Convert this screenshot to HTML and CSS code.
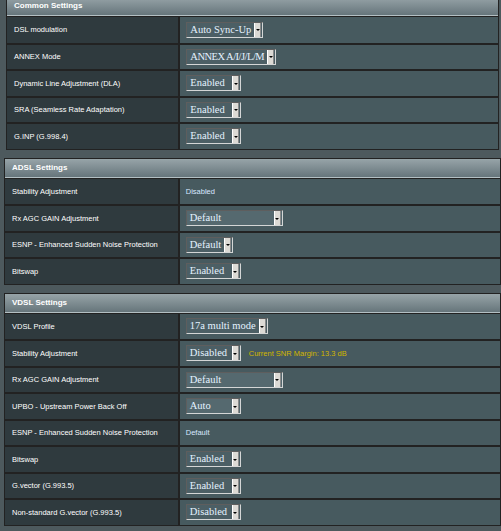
FILE: index.html
```html
<!DOCTYPE html>
<html>
	<head>
		<meta charset="utf-8" />
		<title>DSL Settings</title>
		<link rel="stylesheet" href="styles.css">
	</head>
	<body>
		<div id="page">
			<div class="form-table first">
				<div class="form-head">Common Settings</div>
				<div class="form-row">
					<div class="label">DSL modulation</div>
					<div class="value"><span class="sel"><span class="txt">Auto Sync-Up</span><span class="btn"></span></span></div>
				</div>
				<div class="form-row">
					<div class="label">ANNEX Mode</div>
					<div class="value"><span class="sel"><span class="txt narrow">ANNEX A/I/J/L/M</span><span class="btn"></span></span></div>
				</div>
				<div class="form-row">
					<div class="label">Dynamic Line Adjustment (DLA)</div>
					<div class="value"><span class="sel fixed"><span class="txt">Enabled</span><span class="btn"></span></span></div>
				</div>
				<div class="form-row">
					<div class="label">SRA (Seamless Rate Adaptation)</div>
					<div class="value"><span class="sel fixed"><span class="txt">Enabled</span><span class="btn"></span></span></div>
				</div>
				<div class="form-row">
					<div class="label">G.INP (G.998.4)</div>
					<div class="value"><span class="sel fixed"><span class="txt">Enabled</span><span class="btn"></span></span></div>
				</div>
			</div>

			<div class="form-table">
				<div class="form-head">ADSL Settings</div>
				<div class="form-row">
					<div class="label">Stability Adjustment</div>
					<div class="value plain">Disabled</div>
				</div>
				<div class="form-row">
					<div class="label">Rx AGC GAIN Adjustment</div>
					<div class="value"><span class="sel wide"><span class="txt">Default</span><span class="btn"></span></span></div>
				</div>
				<div class="form-row">
					<div class="label">ESNP - Enhanced Sudden Noise Protection</div>
					<div class="value"><span class="sel"><span class="txt">Default</span><span class="btn"></span></span></div>
				</div>
				<div class="form-row">
					<div class="label">Bitswap</div>
					<div class="value"><span class="sel fixed"><span class="txt">Enabled</span><span class="btn"></span></span></div>
				</div>
			</div>

			<div class="form-table">
				<div class="form-head">VDSL Settings</div>
				<div class="form-row">
					<div class="label">VDSL Profile</div>
					<div class="value"><span class="sel"><span class="txt">17a multi mode</span><span class="btn"></span></span></div>
				</div>
				<div class="form-row">
					<div class="label">Stability Adjustment</div>
					<div class="value">
						<span class="sel fixed"><span class="txt">Disabled</span><span class="btn"></span></span>
						<span class="hint">Current SNR Margin: 13.3 dB</span>
					</div>
				</div>
				<div class="form-row">
					<div class="label">Rx AGC GAIN Adjustment</div>
					<div class="value"><span class="sel wide"><span class="txt">Default</span><span class="btn"></span></span></div>
				</div>
				<div class="form-row">
					<div class="label">UPBO - Upstream Power Back Off</div>
					<div class="value"><span class="sel fixed light"><span class="txt">Auto</span><span class="btn"></span></span></div>
				</div>
				<div class="form-row">
					<div class="label">ESNP - Enhanced Sudden Noise Protection</div>
					<div class="value plain">Default</div>
				</div>
				<div class="form-row">
					<div class="label">Bitswap</div>
					<div class="value"><span class="sel fixed"><span class="txt">Enabled</span><span class="btn"></span></span></div>
				</div>
				<div class="form-row">
					<div class="label">G.vector (G.993.5)</div>
					<div class="value"><span class="sel fixed"><span class="txt">Enabled</span><span class="btn"></span></span></div>
				</div>
				<div class="form-row">
					<div class="label">Non-standard G.vector (G.993.5)</div>
					<div class="value"><span class="sel fixed"><span class="txt">Disabled</span><span class="btn"></span></span></div>
				</div>
			</div>
		</div>
	</body>
</html>
```
FILE: styles.css
```css
html,body{
	margin: 0;
	padding: 0;
}
body{
	background: #4d595d;
	font-family: "Liberation Sans", Arial, sans-serif;
	font-size: 7.5px;
	color: #fff;
	overflow: hidden;
}
#page{
	padding-left: 4px;
}
.form-table{
	border: 1px solid #222;
	margin-top: 8px;
}
.form-table.first{
	margin: -4px 2px 0 2px;
}
.form-head{
	height: 18px;
	line-height: 18px;
	padding-left: 7px;
	font-size: 8px;
	font-weight: bold;
	background: linear-gradient(to bottom, #97a4a8 0%, #66757b 100%);
	border-bottom: 1px solid #b3bfc3;
}
.form-row{
	display: grid;
	grid-template-columns: 35.3% 1fr;
	height: 26.5px;
	box-sizing: border-box;
	border-top: 2px solid #222;
}
.form-row:nth-child(2){
	border-top-width: 1px;
}
.label{
	background: #2f3a3e;
	border-right: 2px solid #222;
	padding-left: 7px;
	display: flex;
	align-items: center;
}
.value{
	background: #475a5f;
	padding-left: 6px;
	display: flex;
	align-items: center;
}
.value.plain{
	color: #d8e8ff;
}
.hint{
	color: #d2b600;
	margin-left: 8px;
}

/* dropdowns */
.sel{
	display: inline-flex;
	align-items: stretch;
	height: 16px;
	box-sizing: border-box;
	border-top: 1px solid #5e5e5e;
	border-left: 1px solid #5e5e5e;
	border-bottom: 1px solid #d4d6d6;
	border-right: 1px solid #d4d6d6;
	background: #4c5f65;
	font-family: "Liberation Serif", "Times New Roman", serif;
	font-size: 10.5px;
	color: #e4f2ff;
}
.sel.fixed{
	width: 55px;
}
.sel.wide{
	width: 97px;
	background: #55696f;
}
.sel.light{
	background: #55696f;
}
.sel .txt{
	flex: 1;
	padding: 0 3px 0 3px;
	line-height: 14px;
	white-space: nowrap;
}
.sel .txt.narrow{
	letter-spacing: -0.5px;
}
.sel .btn{
	width: 7px;
	margin-right: 1px;
	background: #dcdad5;
	border-left: 1px solid #fff;
	border-right: 1px solid #8a8a8a;
	box-sizing: border-box;
	display: flex;
	align-items: center;
	justify-content: center;
}
.sel .btn::after{
	content: "";
	border-left: 2px solid transparent;
	border-right: 2px solid transparent;
	border-top: 2px solid #000;
	margin-top: 1px;
}
```
